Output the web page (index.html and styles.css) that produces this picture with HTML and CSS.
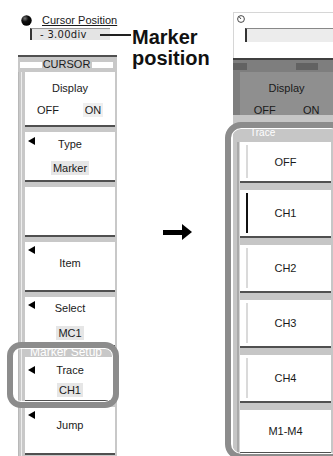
FILE: index.html
```html
<!DOCTYPE html>
<html lang="en">
<head>
    <meta charset="UTF-8">
    <meta name="viewport" content="width=device-width, initial-scale=1.0">
    <title>Cursor - Marker Setup</title>
    <link rel="stylesheet" href="styles.css">
</head>
<body>
    <div class="page">
        <!-- menu before: CURSOR soft keys -->
        <div class="col-left">
            <div class="readout">
                <div class="readout-title">
                    <svg class="knob" width="11" height="11" viewBox="0 0 11 11">
                        <defs>
                            <radialGradient id="ball" cx="0.35" cy="0.3" r="0.7">
                                <stop offset="0" stop-color="#777"/>
                                <stop offset="0.45" stop-color="#111"/>
                                <stop offset="1" stop-color="#000"/>
                            </radialGradient>
                        </defs>
                        <circle cx="5.5" cy="5.5" r="5.2" fill="url(#ball)"/>
                    </svg>
                    <span class="readout-label">Cursor Position</span>
                </div>
                <div class="readout-box">- 3.00div</div>
            </div>

            <div class="panel">
                <div class="panel-head">
                    <span class="bar"></span>
                    <span class="panel-title">CURSOR</span>
                    <span class="bar"></span>
                </div>
                <div class="keys">
                    <div class="key key-display">
                        <div class="key-wide">Display</div>
                        <div class="toggle">
                            <span>OFF</span>
                            <span class="on">ON</span>
                        </div>
                    </div>
                    <div class="key key-type">
                        <span class="tri"></span>
                        <span class="key-name">Type</span>
                        <span class="val">Marker</span>
                    </div>
                    <div class="key key-blank"></div>
                    <div class="key key-split key-item">
                        <span class="tri"></span>
                        <span class="key-name">Item</span>
                    </div>
                    <div class="key key-select">
                        <span class="tri"></span>
                        <span class="key-name">Select</span>
                        <span class="val">MC1</span>
                    </div>
                    <div class="group-label">Marker Setup</div>
                    <div class="key key-trace">
                        <span class="tri"></span>
                        <span class="key-name">Trace</span>
                        <span class="val">CH1</span>
                    </div>
                    <div class="key key-split key-jump">
                        <span class="tri"></span>
                        <span class="key-name">Jump</span>
                    </div>
                </div>
            </div>
        </div>

        <div class="col-mid">
            <div class="callout">
                <span class="leader"></span>
                <span class="callout-text">Marker<br>position</span>
            </div>
            <svg class="arrow" width="29" height="16" viewBox="0 0 29 16">
                <rect x="0" y="6" width="20" height="5" fill="#000"/>
                <polygon points="19,0 29,8 19,16" fill="#000"/>
            </svg>
        </div>

        <!-- menu after: Trace pop-up -->
        <div class="col-right">
            <div class="readout-r">
                <div class="r-frame">
                    <svg class="dial" width="8" height="8" viewBox="0 0 8 8">
                        <circle cx="4" cy="4" r="3.4" fill="#fff" stroke="#333" stroke-width="0.9"/>
                        <line x1="4" y1="4" x2="2" y2="1.6" stroke="#333" stroke-width="0.9"/>
                    </svg>
                    <div class="r-box"></div>
                </div>
            </div>
            <div class="panel-r">
                <div class="head-r">
                    <span class="bar-r bar-r1"></span>
                    <span class="bar-r bar-r2"></span>
                </div>
                <div class="dim-key">
                    <div class="key-wide">Display</div>
                    <div class="toggle">
                        <span>OFF</span>
                        <span>ON</span>
                    </div>
                </div>
                <div class="menu">
                    <div class="menu-label">Trace</div>
                    <div class="opts">
                        <div class="opt opt-first"><span class="opt-face">OFF</span></div>
                        <div class="opt"><span class="opt-face selected">CH1</span></div>
                        <div class="opt"><span class="opt-face">CH2</span></div>
                        <div class="opt"><span class="opt-face">CH3</span></div>
                        <div class="opt"><span class="opt-face">CH4</span></div>
                        <div class="opt opt-last"><span class="opt-face plain">M1-M4</span></div>
                    </div>
                </div>
            </div>
        </div>

        <div class="ring ring-left"></div>
        <div class="ring ring-right"></div>
    </div>
</body>
</html>
```

FILE: styles.css
```css
body {
    margin: 0;
    background-color: #fff;
    font-family: "Liberation Sans", Arial, sans-serif;
    color: #1a1a1a;
}
.page {
    position: relative;
    display: flex;
    width: 333px;
    height: 456px;
    overflow: hidden;
}

/* left column */
.col-left {
    width: 117px;
    flex: none;
}
.readout {
    height: 55px;
    padding-top: 14px;
    box-sizing: border-box;
}
.readout-title {
    display: flex;
    align-items: center;
    gap: 10px;
    height: 12px;
    padding-left: 21px;
}
.knob {
    flex: none;
}
.readout-label {
    font-size: 11px;
    line-height: 12px;
    text-decoration: underline;
    white-space: nowrap;
}
.readout-box {
    width: 80px;
    height: 12px;
    margin: 2px 0 0 30px;
    padding-left: 8px;
    box-sizing: border-box;
    background-color: #e4e4e4;
    border-left: 2px solid #333;
    border-top: 1px solid #999;
    font-family: "DejaVu Sans", sans-serif;
    font-size: 10px;
    line-height: 11px;
    letter-spacing: 0.3px;
}
.panel {
    height: 401px;
    margin-left: 18px;
    box-sizing: border-box;
    border-top: 2px solid #505050;
    background: linear-gradient(to right, #b8b8b8 0 1px, #c8c8c8 1px 3px, #ececec 3px 4px, #c8c8c8 4px);
}
.panel-head {
    display: flex;
    align-items: center;
    height: 15px;
    padding: 0 4px 0 2px;
    background-color: #c8c8c8;
}
.bar {
    flex: 1;
    height: 6px;
    background-color: #fff;
}
.panel-title {
    width: 50px;
    text-align: center;
    font-size: 11px;
    line-height: 15px;
}
.keys {
    padding: 0 2px 0 7px;
}
.key {
    display: grid;
    grid-template-columns: 12px 1fr 12px;
    align-content: start;
    height: 50px;
    margin-bottom: 5px;
    box-sizing: border-box;
    background-color: #fff;
    border-bottom: 2px solid #505050;
    font-size: 11px;
    line-height: 14px;
    text-align: center;
}
.key-wide {
    grid-column: 1 / -1;
}
.key-name {
    grid-column: 2;
}
.tri {
    grid-column: 1;
    width: 0;
    height: 0;
    margin: 0 0 0 3px;
    border-top: 4px solid transparent;
    border-bottom: 4px solid transparent;
    border-right: 7px solid #000;
}
.val {
    grid-column: 2;
    justify-self: center;
    padding: 0 2px;
    background-color: #e6e6e6;
}
.toggle {
    grid-column: 1 / -1;
    display: flex;
    justify-content: space-around;
    margin-top: 8px;
}
.on {
    padding: 0 2px;
    background-color: #efefef;
}
.key-display {
    height: 55px;
    padding-top: 9px;
}
.key-type {
    padding-top: 5px;
}
.key-type .val {
    margin-top: 10px;
}
.key-split {
    padding-top: 3px;
}
.key-split .tri {
    margin-top: 1px;
}
.key-split .key-name {
    grid-row: 2;
    margin-top: 2px;
}
.key-jump .key-name {
    margin-top: -1px;
}
.key-select {
    padding-top: 4px;
    margin-bottom: 0;
}
.key-select .val {
    margin-top: 11px;
}
.group-label {
    height: 10px;
    padding-left: 5px;
    font-size: 12px;
    line-height: 10px;
    color: #fff;
    white-space: nowrap;
}
.key-trace {
    height: 45px;
    padding-top: 6px;
}
.key-trace .tri {
    margin-top: 3px;
}
.key-trace .val {
    margin-top: 6px;
}
.key-jump {
    height: 48px;
}

/* middle: callout and arrow */
.col-mid {
    display: flex;
    flex-direction: column;
    width: 116px;
    flex: none;
    padding-top: 27px;
    box-sizing: border-box;
}
.callout {
    display: flex;
    align-items: flex-start;
    margin-left: -17px;
}
.leader {
    flex: none;
    width: 31px;
    height: 2px;
    margin-top: 7px;
    background-color: #222;
}
.callout-text {
    margin-left: 1px;
    font-size: 20px;
    line-height: 21px;
    font-weight: bold;
    color: #111;
}
.arrow {
    margin: 155px 0 0 46px;
}

/* right column */
.col-right {
    width: 100px;
    flex: none;
}
.readout-r {
    height: 58px;
    padding-top: 12px;
    box-sizing: border-box;
}
.r-frame {
    height: 46px;
    box-sizing: border-box;
    border-top: 1px solid #d6d6d6;
    border-left: 1px solid #d6d6d6;
}
.dial {
    display: block;
    margin: 2px 0 0 3px;
}
.r-box {
    height: 14px;
    margin: 5px 0 0 11px;
    box-sizing: border-box;
    background-color: #ececec;
    border-left: 2px solid #333;
    border-top: 1px solid #888;
}
.panel-r {
    height: 398px;
    border-top: 2px solid #404040;
    background-color: #7e7e7e;
}
.head-r {
    display: flex;
    align-items: center;
    height: 12px;
}
.bar-r {
    height: 7px;
    background-color: #626262;
}
.bar-r1 {
    width: 14px;
}
.bar-r2 {
    width: 22px;
    margin-left: 49px;
}
.dim-key {
    display: grid;
    height: 43px;
    margin-left: 7px;
    padding-top: 9px;
    box-sizing: border-box;
    overflow: hidden;
    background-color: #8f8f8f;
    font-size: 11px;
    line-height: 14px;
    text-align: center;
    align-content: start;
}
.menu {
    height: 341px;
    background-color: #c6c6c6;
}
.menu-label {
    height: 27px;
    padding: 12px 0 0 17px;
    box-sizing: border-box;
    font-size: 10px;
    line-height: 12px;
    color: #fff;
}
.opts {
    padding: 0 2px 0 7px;
    background: linear-gradient(to right, #c6c6c6 0 4px, #a9a9a9 4px 6px, #d4d4d4 6px 7px, #c6c6c6 7px);
}
.opt {
    display: flex;
    height: 48px;
    margin-bottom: 7px;
    padding: 3px 0;
    box-sizing: border-box;
    background-color: #fff;
    border-bottom: 2px solid #505050;
}
.opt-first {
    height: 41px;
}
.opt-last {
    height: 44px;
}
.opt-face {
    display: flex;
    flex: 1;
    align-items: center;
    justify-content: center;
    margin-left: 6px;
    padding-right: 8px;
    border-left: 2px solid #dadada;
    font-size: 11px;
}
.opt-face.selected {
    border-left-color: #111;
}
.opt-face.plain {
    border-left-color: transparent;
}

/* grey rings marking the changed item */
.ring {
    position: absolute;
    box-sizing: border-box;
    border: 6px solid #8c8c8c;
    border-radius: 14px;
    box-shadow: inset 0 0 0 1px #fff;
}
.ring-left {
    left: 7px;
    top: 342px;
    width: 112px;
    height: 66px;
}
.ring-right {
    left: 225px;
    top: 122px;
    width: 122px;
    height: 338px;
    border-radius: 16px;
}
```
